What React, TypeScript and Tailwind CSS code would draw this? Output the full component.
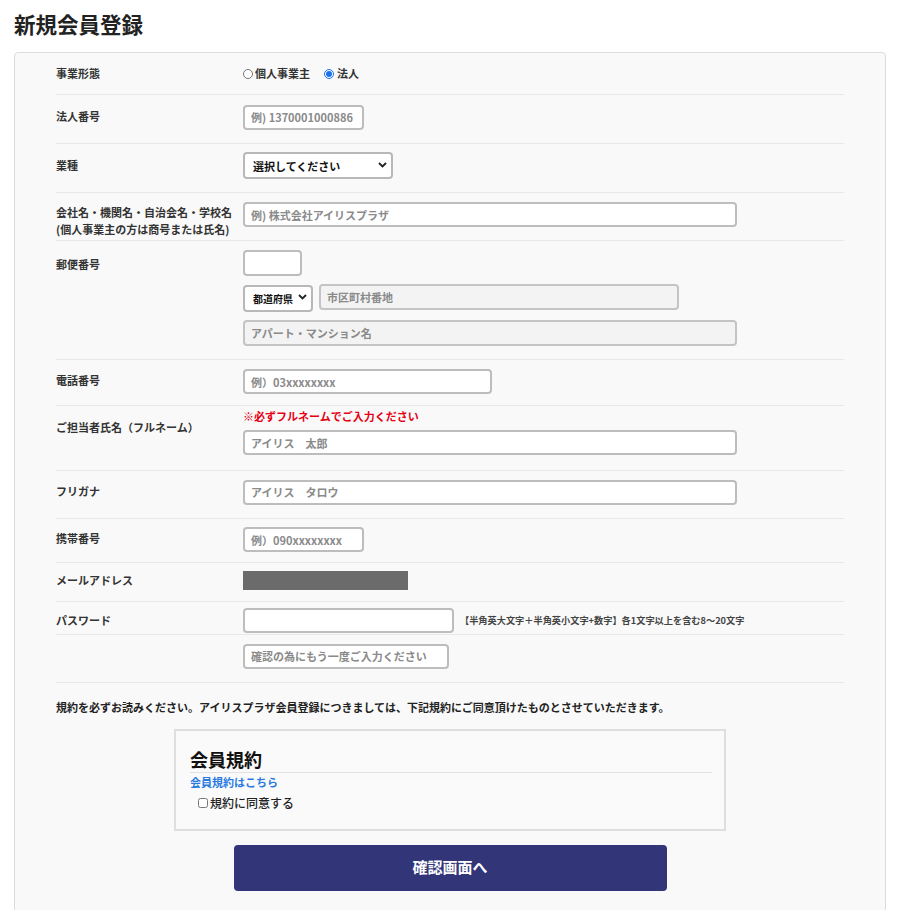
import type { ReactNode } from "react";

const font = { fontFamily: '"Noto Sans CJK JP", "Noto Sans", sans-serif' };

const inputCls =
    "h-[25px] rounded-[4px] border-2 border-[#bdbdbd] bg-white px-[6px] text-[11px] font-bold text-[#333] placeholder:text-[#8a8a8a] outline-none";
const grayInputCls =
    "h-[26px] rounded-[4px] border-2 border-[#c4c4c4] bg-[#f3f3f3] px-[6px] text-[11px] font-bold text-[#333] placeholder:text-[#8a8a8a] outline-none";

function Row({ label, children, className, labelClass }: { label?: ReactNode; children: ReactNode; className: string; labelClass?: string }) {
    return (
        <div className={`flex border-b border-[#e8e8e8] ${className}`}>
            <div className={`w-[187px] shrink-0 text-[11px] font-bold leading-[17px] text-[#333] ${labelClass ?? ""}`}>{label}</div>
            <div className="flex-1">{children}</div>
        </div>
    );
}

function Select({ label, className, textClass }: { label: string; className: string; textClass: string }) {
    return (
        <div className={`relative ${className}`}>
            <select className={`h-full w-full appearance-none rounded-[4px] border-2 border-[#b8b8b8] bg-white font-bold text-[#111] outline-none ${textClass}`}>
                <option>{label}</option>
            </select>
            <svg className="pointer-events-none absolute right-[6px] top-1/2 -translate-y-1/2" width="9" height="6" viewBox="0 0 9 6">
                <path d="M1 1l3.5 3.5L8 1" fill="none" stroke="#222" strokeWidth="1.8" />
            </svg>
        </div>
    );
}

export default function App() {
    return (
        <div className="min-h-[910px] bg-white px-[14px] pt-[9px]" style={font}>
            <h1 className="text-[21.5px] font-bold leading-[30px] text-[#222]">新規会員登録</h1>
            <div className="mt-[13px] h-[870px] rounded-t-[4px] border border-[#dcdcdc] bg-[#f9f9f9] px-[41px]">
                <Row label="事業形態" className="h-[42px] items-center">
                    <div className="flex items-center text-[11px] font-bold text-[#333]">
                        <label className="flex items-center gap-[2px]">
                            <input type="radio" name="biz" className="m-0 h-[10px] w-[10px]" />
                            <span>個人事業主</span>
                        </label>
                        <label className="ml-[14px] flex items-center gap-[3px]">
                            <input type="radio" name="biz" defaultChecked className="m-0 h-[10px] w-[10px] accent-[#1a73e8]" />
                            <span>法人</span>
                        </label>
                    </div>
                </Row>
                <Row label="法人番号" className="items-center pb-[13px] pt-[8px]">
                    <input className={`${inputCls} w-[121px]`} placeholder="例) 1370001000886" />
                </Row>
                <Row label="業種" className="items-center pb-[13px] pt-[8px]">
                    <Select label="選択してください" className="h-[27px] w-[150px]" textClass="pl-[8px] text-[11px]" />
                </Row>
                <Row
                    label={
                        <>
                            会社名・機関名・自治会名・学校名
                            <br />
                            (個人事業主の方は商号または氏名)
                        </>
                    }
                    className="pb-[2px] pt-[8px]"
                    labelClass="pt-[3px]"
                >
                    <input className={`${inputCls} w-[494px]`} placeholder="例) 株式会社アイリスプラザ" />
                </Row>
                <Row label="郵便番号" className="pb-[13px] pt-[8px]" labelClass="pt-[7px]">
                    <input className={`${inputCls} h-[26px] w-[59px]`} />
                    <div className="mt-[8px] flex gap-[6px]">
                        <Select label="都道府県" className="h-[27px] w-[70px]" textClass="pl-[8px] text-[10px]" />
                        <input className={`${grayInputCls} w-[360px]`} placeholder="市区町村番地" />
                    </div>
                    <input className={`${grayInputCls} mt-[9px] w-[494px]`} placeholder="アパート・マンション名" />
                </Row>
                <Row label="電話番号" className="items-center pb-[11px] pt-[8px]">
                    <input className={`${inputCls} w-[249px]`} placeholder="例）03xxxxxxxx" />
                </Row>
                <Row label="ご担当者氏名（フルネーム）" className="pb-[15px] pt-[2px]" labelClass="pt-[11px]">
                    <p className="text-[11px] font-bold leading-[16px] text-[#e60012]">※必ずフルネームでご入力ください</p>
                    <input className={`${inputCls} mt-[6px] w-[494px]`} placeholder="アイリス　太郎" />
                </Row>
                <Row label="フリガナ" className="items-center pb-[13px] pt-[7px]">
                    <input className={`${inputCls} w-[494px]`} placeholder="アイリス　タロウ" />
                </Row>
                <Row label="携帯番号" className="items-center pb-[10px] pt-[7px]">
                    <input className={`${inputCls} w-[121px]`} placeholder="例）090xxxxxxxx" />
                </Row>
                <Row label="メールアドレス" className="items-center pb-[11px] pt-[8px]">
                    <div className="h-[19px] w-[165px] bg-[#6b6b6b]" />
                </Row>
                <Row label="パスワード" className="items-center pb-[1px] pt-[6px]">
                    <div className="flex items-center">
                        <input type="password" className={`${inputCls} w-[211px]`} />
                        <span className="ml-[6px] text-[9.2px] font-bold text-[#444]">【半角英大文字＋半角英小文字+数字】各1文字以上を含む8～20文字</span>
                    </div>
                </Row>
                <Row className="pb-[13px] pt-[7px]">
                    <input className={`${inputCls} w-[206px]`} placeholder="確認の為にもう一度ご入力ください" />
                </Row>
                <p className="mt-[16px] text-[11px] font-bold leading-[17px] text-[#222]">
                    規約を必ずお読みください。アイリスプラザ会員登録につきましては、下記規約にご同意頂けたものとさせていただきます。
                </p>
                <div className="mx-auto mt-[13px] w-[552px] border-2 border-[#dedede] bg-[#fafafa] pb-[17px] pl-[14px] pr-[12px] pt-[16px]">
                    <h2 className="border-b border-[#e2e2e2] pb-[1px] text-[18px] font-bold leading-[24px] text-[#111]">会員規約</h2>
                    <a className="mt-[1px] block text-[11px] font-bold leading-[17px] text-[#2a7ae2]">会員規約はこちら</a>
                    <label className="ml-[8px] mt-[3px] flex items-center gap-[2px] text-[12px] font-medium text-[#222]">
                        <input type="checkbox" className="m-0 h-[10px] w-[10px]" />
                        <span>規約に同意する</span>
                    </label>
                </div>
                <button
                    type="button"
                    className="mx-auto mt-[14px] flex h-[46px] w-[433px] items-center justify-center rounded-[4px] bg-[#333579] text-[15px] font-bold text-white"
                >
                    確認画面へ
                </button>
            </div>
        </div>
    );
}
